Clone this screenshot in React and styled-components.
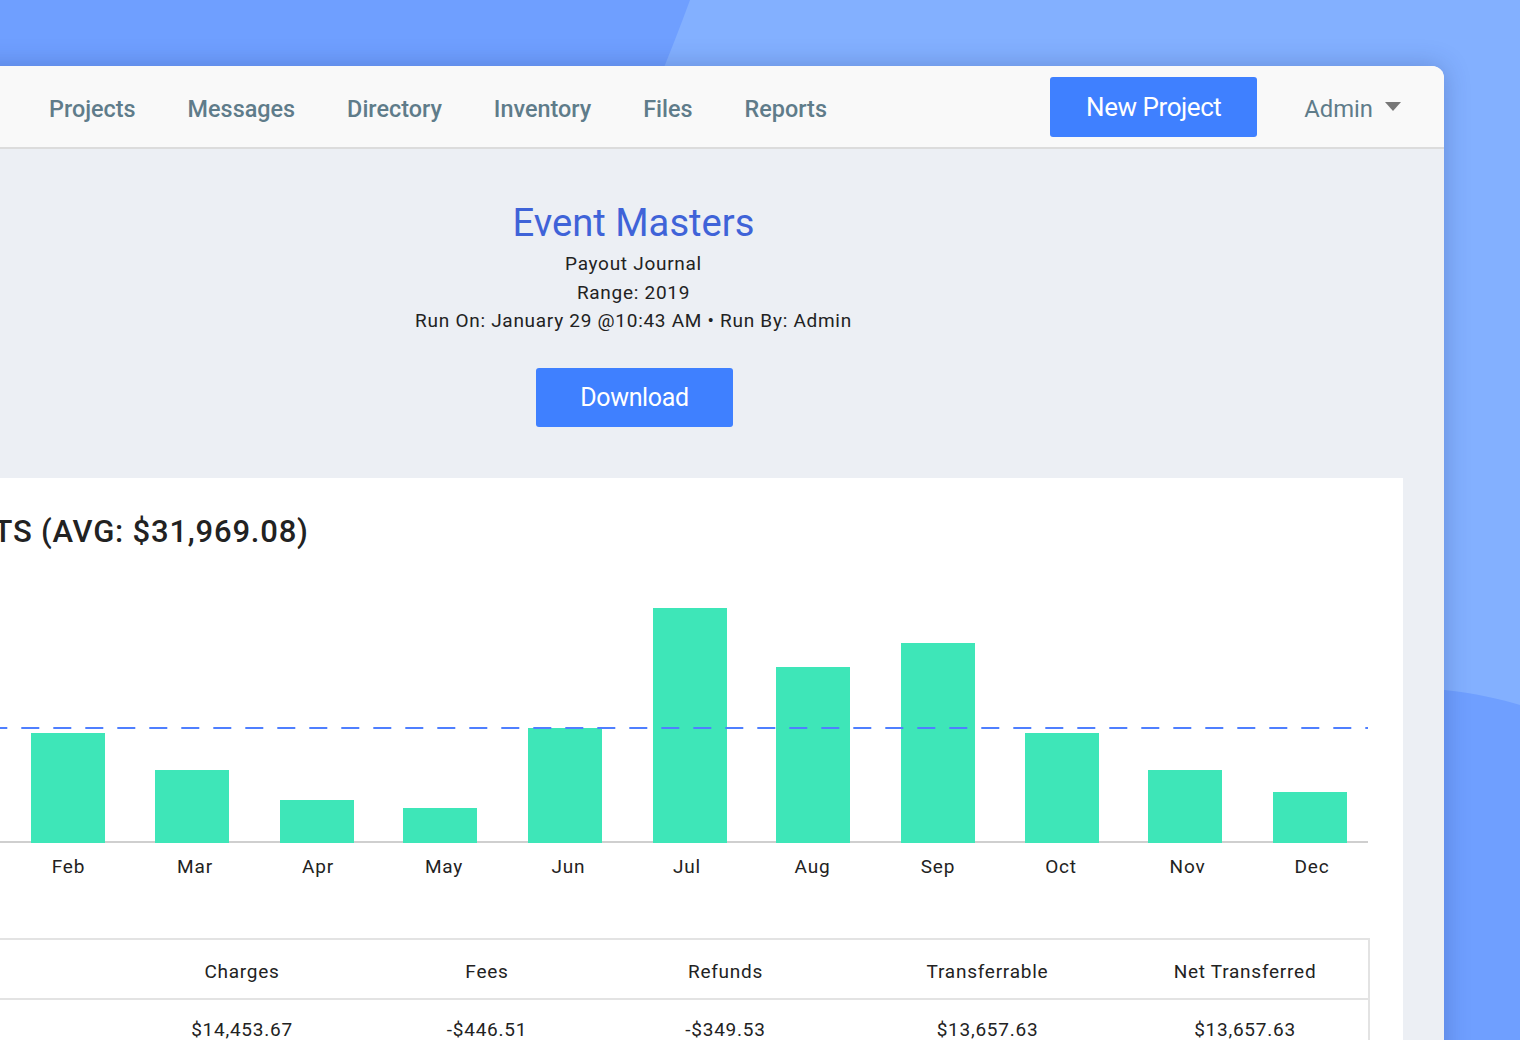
import React from 'react';
import styled, { createGlobalStyle } from 'styled-components';

const GlobalStyle = createGlobalStyle`
  html, body {
    margin: 0;
    height: 100%;
    overflow: hidden;
    font-family: Roboto, "Liberation Sans", sans-serif;
  }
  #root {
    height: 100%;
  }
`;

const links = ['Projects', 'Messages', 'Directory', 'Inventory', 'Files', 'Reports'];

const bars = [
  { month: 'Feb', x: 31, top: 733, labelX: 68.5 },
  { month: 'Mar', x: 155, top: 770, labelX: 195 },
  { month: 'Apr', x: 280, top: 800, labelX: 318 },
  { month: 'May', x: 403, top: 808, labelX: 444 },
  { month: 'Jun', x: 528, top: 728, labelX: 568.5 },
  { month: 'Jul', x: 653, top: 608, labelX: 687 },
  { month: 'Aug', x: 776, top: 667, labelX: 812.5 },
  { month: 'Sep', x: 901, top: 643, labelX: 938 },
  { month: 'Oct', x: 1025, top: 733, labelX: 1061 },
  { month: 'Nov', x: 1148, top: 770, labelX: 1187.5 },
  { month: 'Dec', x: 1273, top: 792, labelX: 1312 },
];

const columns = ['Charges', 'Fees', 'Refunds', 'Transferrable', 'Net Transferred'];
const values = ['$14,453.67', '-$446.51', '-$349.53', '$13,657.63', '$13,657.63'];

// chart svg starts at y=580 on the page and x=-101
const chartLeft = -101;
const chartTop = 580;

const Chart = () => (
  <ChartSvg viewBox="0 0 1469 310" width="1469" height="310">
    {bars.map((bar) => (
      <g key={bar.month}>
        <rect
          x={bar.x - chartLeft}
          y={bar.top - chartTop}
          width="74"
          height={843 - bar.top}
          fill="#3EE6B8"
        />
        <text
          x={bar.labelX - chartLeft}
          y={872.5 - chartTop}
          textAnchor="middle"
          fontSize="19"
          letterSpacing="0.8"
          fill="#222"
        >
          {bar.month}
        </text>
      </g>
    ))}
    <line x1="0" x2="1469" y1={728 - chartTop} y2={728 - chartTop} stroke="#4F7FFF" strokeWidth="2" strokeDasharray="18 14" strokeDashoffset="5.7" />
    <rect x="0" y={841 - chartTop} width="1469" height="2" fill="#CFCFCF" />
    {bars.map((bar) => (
      <rect key={bar.month} x={bar.x - chartLeft} y={841 - chartTop} width="74" height="2" fill="#3EE6B8" />
    ))}
  </ChartSvg>
);

const App = () => {
  return (
    <Page>
      <GlobalStyle />
      <Backdrop viewBox="0 0 1520 1040" preserveAspectRatio="none">
        <path d="M690 0 C679 30 671 50 663 70 C560 330 760 640 1444 690 C1475 693 1500 699 1520 705 L1520 0 Z" fill="#83B0FF" />
      </Backdrop>
      <Window>
        <Navbar>
          <NavLinks>
            {links.map((link) => (
              <NavLink key={link}>{link}</NavLink>
            ))}
          </NavLinks>
          <NavRight>
            <NewButton>New Project</NewButton>
            <AdminMenu>
              Admin
              <Caret />
            </AdminMenu>
          </NavRight>
        </Navbar>
        <Content>
          <Header>
            <Title>Event Masters</Title>
            <Meta>Payout Journal</Meta>
            <Meta>Range: 2019</Meta>
            <Meta>Run On: January 29 @10:43 AM • Run By: Admin</Meta>
            <DownloadButton>Download</DownloadButton>
          </Header>
          <Card>
            <CardTitle>PAYOUTS (AVG: $31,969.08)</CardTitle>
            <Chart />
            <Table>
              <HeaderRow>
                <Cell />
                {columns.map((col) => (
                  <Cell key={col}>{col}</Cell>
                ))}
              </HeaderRow>
              <Row>
                <Cell />
                {values.map((val, i) => (
                  <Cell key={columns[i]}>{val}</Cell>
                ))}
              </Row>
            </Table>
          </Card>
        </Content>
      </Window>
    </Page>
  );
};

export default App;

const Page = styled.div`
  position: relative;
  height: 100%;
  overflow: hidden;
  background: #6f9fff;
  padding-top: 66px;
  box-sizing: border-box;
`;

const Backdrop = styled.svg`
  position: absolute;
  top: 0;
  left: 0;
  width: 100%;
  height: 100%;
`;

const Window = styled.div`
  position: relative;
  width: 1620px;
  height: 1100px;
  margin-left: -176px;
  border-radius: 0 12px 0 0;
  background: #eceff4;
  box-shadow: 0 0 26px rgba(30, 50, 110, 0.28);
  overflow: hidden;
`;

const Navbar = styled.nav`
  display: flex;
  align-items: center;
  justify-content: space-between;
  height: 83px;
  padding: 0 43px 0 225px;
  box-sizing: border-box;
  background: #f9f9f9;
  border-bottom: 2px solid #dcdcdc;
`;

const NavLinks = styled.div`
  display: flex;
  gap: 52px;
  padding-top: 4px;
`;

const NavLink = styled.a`
  font-size: 23.4px;
  font-weight: 500;
  color: #5f7c8a;
`;

const NavRight = styled.div`
  display: flex;
  align-items: center;
  gap: 48px;
`;

const NewButton = styled.button`
  width: 207px;
  height: 60px;
  margin-top: 1px;
  padding: 0;
  border: 0;
  border-radius: 3px;
  background: #3f80ff;
  color: #fff;
  font-family: inherit;
  font-size: 26px;
  font-weight: 400;
  letter-spacing: -0.45px;
`;

const AdminMenu = styled.div`
  display: flex;
  align-items: center;
  gap: 12px;
  margin-left: -1px;
  padding-top: 4px;
  font-size: 23.8px;
  color: #5f7c8a;
`;

const Caret = styled.span`
  width: 0;
  height: 0;
  margin-bottom: 4px;
  border-left: 8px solid transparent;
  border-right: 8px solid transparent;
  border-top: 9px solid #777;
`;

const Content = styled.main`
  padding: 0 41px 0 40px;
`;

const Header = styled.header`
  display: flex;
  flex-direction: column;
  align-items: center;
  padding-top: 50px;
  height: 329px;
  box-sizing: border-box;
`;

const Title = styled.h1`
  margin: 0 0 3px;
  font-size: 38.2px;
  font-weight: 400;
  line-height: 48px;
  color: #3f63d8;
`;

const Meta = styled.div`
  font-size: 19px;
  letter-spacing: 0.72px;
  line-height: 28.5px;
  color: #222;
`;

const DownloadButton = styled.button`
  width: 197px;
  height: 59px;
  margin: 32px 0 0 2px;
  padding: 0;
  border: 0;
  border-radius: 3px;
  background: #3f80ff;
  color: #fff;
  font-family: inherit;
  font-size: 25px;
  font-weight: 400;
  letter-spacing: -0.35px;
`;

const Card = styled.section`
  padding: 34px 35px 0;
  background: #fff;
`;

const CardTitle = styled.h2`
  margin: 0 0 0 -6px;
  font-size: 31px;
  font-weight: 500;
  line-height: 40px;
  letter-spacing: 0.8px;
  color: #222;
`;

const ChartSvg = styled.svg`
  display: block;
  margin-top: 28px;
  font-family: Roboto, sans-serif;
`;

const Table = styled.div`
  width: 1471px;
  margin-top: 48px;
  border: 2px solid #e3e3e3;
  box-sizing: border-box;
`;

const Row = styled.div`
  display: grid;
  grid-template-columns: 207px 268px 222px 255px 269px 246px;
  height: 60px;
  box-sizing: border-box;
  align-items: center;
  border-bottom: 2px solid #e3e3e3;
`;

const HeaderRow = styled(Row)`
  padding-top: 4px;
`;

const Cell = styled.div`
  text-align: center;
  font-size: 19px;
  letter-spacing: 0.75px;
  color: #222;
`;
